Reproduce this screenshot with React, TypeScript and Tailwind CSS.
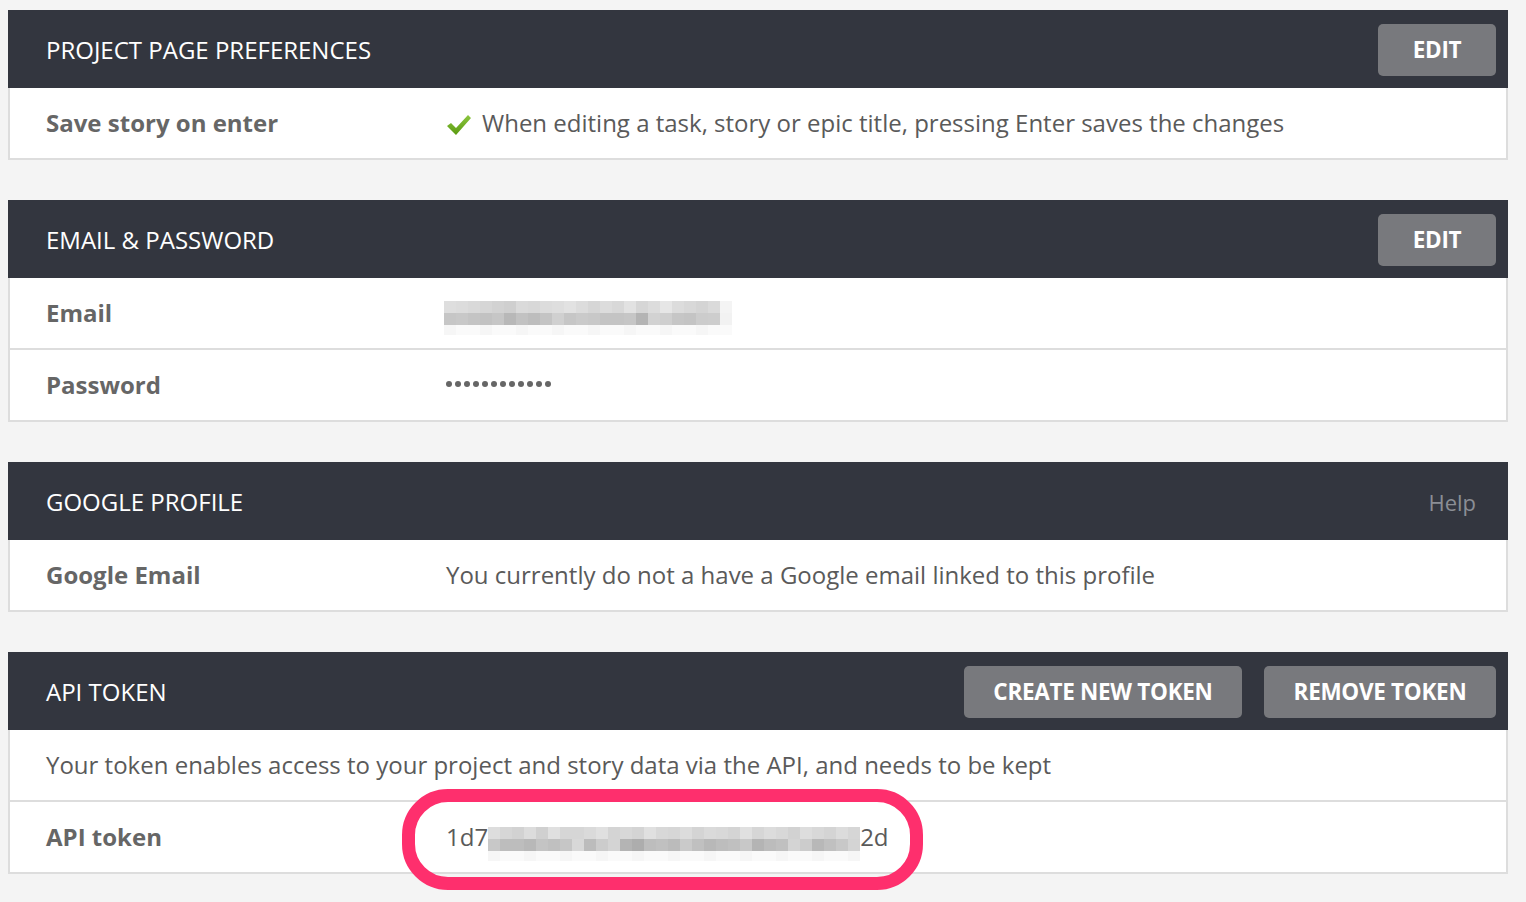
import React from "react";

const font = { fontFamily: '"Open Sans", "Noto Sans", sans-serif' };

const emailTop = ["#dedede","#dcdcdc","#d9d9d9","#d6d6d6","#d2d2d2","#cfcfcf","#dadada","#d8d8d8","#dcdcdc","#dedede","#e2e2e2","#dcdcdc","#d6d6d6","#dcdcdc","#d8d8d8","#e2e2e2","#d6d6d6","#dcdcdc","#e6e6e6","#dcdcdc","#d8d8d8","#d4d4d4","#dadada","#f4f4f4"];
const emailMid = ["#c6c6c6","#c8c8c8","#c4c4c4","#c2c2c2","#c6c6c6","#b8b8b8","#c2c2c2","#bdbdbd","#c4c4c4","#d0d0d0","#c6c6c6","#cacaca","#c8c8c8","#c4c4c4","#c4c4c4","#c6c6c6","#b4b4b4","#d2d2d2","#cfcfcf","#c6c6c6","#c4c4c4","#cccccc","#cdcdcd","#f2f2f2"];

const tokTop = ["#dddddd","#d6d6d6","#d2d2d2","#dcdcdc","#d0d0d0","#e0e0e0","#d6d6d6","#d6d6d6","#dadada","#e0e0e0","#d4d4d4","#d8d8d8","#d4d4d4","#e0e0e0","#d8d8d8","#d6d6d6","#dcdcdc","#d4d4d4","#dadada","#d8d8d8","#d4d4d4","#e0e0e0","#d6d6d6","#dcdcdc","#d8d8d8","#d2d2d2","#dddddd","#d8d8d8","#d4d4d4","#dcdcdc","#d6d6d6"];
const tokMid = ["#c8c8c8","#bdbdbd","#bdbdbd","#b8b8b8","#c4c4c4","#c0c0c0","#c6c6c6","#d8d8d8","#bcbcbc","#cccccc","#d4d4d4","#b4b4b4","#adadad","#bdbdbd","#c0c0c0","#bbbbbb","#cacaca","#c0c0c0","#b8b8b8","#bdbdbd","#c0c0c0","#c8c8c8","#b4b4b4","#bcbcbc","#c0c0c0","#d4d4d4","#cccccc","#b8b8b8","#c0c0c0","#c8c8c8","#d4d4d4"];

function Pixels({ top, mid, w }: { top: string[]; mid: string[]; w: number }) {
  return (
    <div className="flex flex-col">
      <div className="flex">
        {top.map((c, i) => (
          <div key={i} className="h-[12px]" style={{ width: w, background: c }} />
        ))}
      </div>
      <div className="flex">
        {mid.map((c, i) => (
          <div key={i} className="h-[12px]" style={{ width: w, background: c }} />
        ))}
      </div>
      <div className="flex">
        {top.map((c, i) => (
          <div key={i} className="h-[10px]" style={{ width: w, background: i % 3 === 0 ? "#f6f6f6" : "#fafafa" }} />
        ))}
      </div>
    </div>
  );
}

function Btn({ children, w }: { children: React.ReactNode; w: string }) {
  return (
    <div
      className={`h-[52px] ${w} rounded-[5px] bg-[#78797d] flex items-center justify-center text-white font-bold text-[22.5px] tracking-[-0.3px]`}
    >
      {children}
    </div>
  );
}

function Header({ title, right }: { title: string; right?: React.ReactNode }) {
  return (
    <div className="h-[78px] bg-[#33363f] flex items-center justify-between pl-[38px] pr-[12px]">
      <div className="text-white text-[24px] mt-[2px]">{title}</div>
      <div className="mt-[2px]">{right}</div>
    </div>
  );
}

function Row({ label, children }: { label?: string; children: React.ReactNode }) {
  return (
    <div className="h-[70px] box-content flex items-center pl-[36px]">
      {label !== undefined && (
        <div className="w-[400px] shrink-0 text-[24px] text-[#666666] font-bold">{label}</div>
      )}
      <div className="flex items-center text-[24px] text-[#5a5a5a]">{children}</div>
    </div>
  );
}

function Body({ children }: { children: React.ReactNode }) {
  return (
    <div className="bg-white border-x-2 border-b-2 border-[#dddddd] divide-y-2 divide-[#dddddd]">{children}</div>
  );
}

export default function App() {
  return (
    <div className="min-h-screen w-full bg-[#f4f4f4] pt-[10px] px-[8px]" style={font}>
      <div className="w-[1500px] flex flex-col gap-[40px]">
        <div>
          <Header title="PROJECT PAGE PREFERENCES" right={<Btn w="w-[118px]">EDIT</Btn>} />
          <Body>
            <Row label="Save story on enter">
              <svg width="26" height="22" viewBox="0 0 26 22" className="mr-[10px] mt-[4px]">
                <defs>
                  <linearGradient id="g" x1="0" y1="0" x2="0" y2="1">
                    <stop offset="0" stopColor="#8cc63f" />
                    <stop offset="1" stopColor="#5a9a10" />
                  </linearGradient>
                </defs>
                <path d="M1 12 L5 9 L10 14 L22 1 L25 4 L10 21 Z" fill="url(#g)" />
              </svg>
              When editing a task, story or epic title, pressing Enter saves the changes
            </Row>
          </Body>
        </div>

        <div>
          <Header title="EMAIL & PASSWORD" right={<Btn w="w-[118px]">EDIT</Btn>} />
          <Body>
            <Row label="Email">
              <div className="mt-[10px] -ml-[2px]">
                <Pixels top={emailTop} mid={emailMid} w={12} />
              </div>
            </Row>
            <Row label="Password">
              <div className="flex gap-[3px] mt-[-2px]">
                {Array.from({ length: 12 }).map((_, i) => (
                  <div key={i} className="w-[6px] h-[6px] rounded-full bg-[#666666]" />
                ))}
              </div>
            </Row>
          </Body>
        </div>

        <div>
          <Header
            title="GOOGLE PROFILE"
            right={<div className="text-[22px] text-[#8b8e95] mr-[20px]">Help</div>}
          />
          <Body>
            <Row label="Google Email">You currently do not a have a Google email linked to this profile</Row>
          </Body>
        </div>

        <div>
          <Header
            title="API TOKEN"
            right={
              <div className="flex gap-[22px]">
                <Btn w="w-[278px]">CREATE NEW TOKEN</Btn>
                <Btn w="w-[232px]">REMOVE TOKEN</Btn>
              </div>
            }
          />
          <Body>
            <Row>Your token enables access to your project and story data via the API, and needs to be kept</Row>
            <Row label="API token">
              <div className="relative flex items-center">
                <span>1d7</span>
                <div className="mt-[14px]">
                  <Pixels top={tokTop} mid={tokMid} w={12} />
                </div>
                <span>2d</span>
                <div className="absolute left-[-44px] top-[-24px] w-[521px] h-[101px] rounded-[46px] border-[13px] border-[#fe2f6d]" />
              </div>
            </Row>
          </Body>
        </div>
      </div>
    </div>
  );
}
